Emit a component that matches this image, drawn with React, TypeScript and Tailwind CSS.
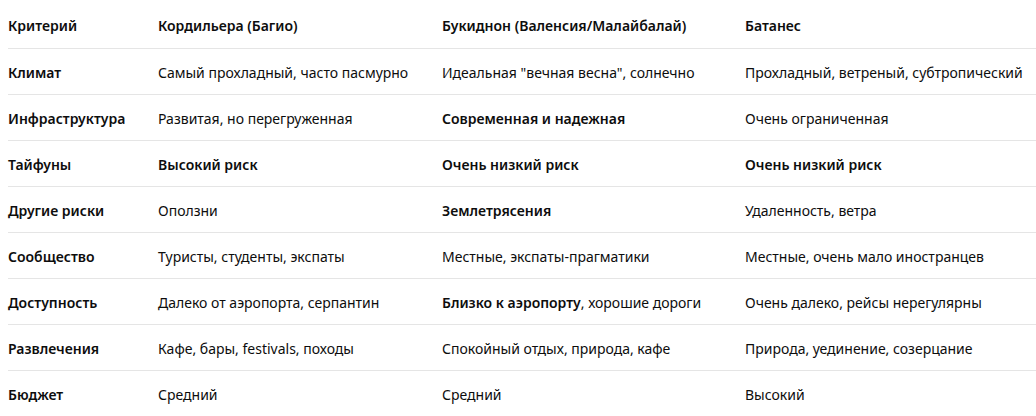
import React from "react";

const header = ["Критерий", "Кордильера (Багио)", "Букиднон (Валенсия/Малайбалай)", "Батанес"];

const rows: React.ReactNode[][] = [
  ["Климат", "Самый прохладный, часто пасмурно", "Идеальная \"вечная весна\", солнечно", "Прохладный, ветреный, субтропический"],
  ["Инфраструктура", "Развитая, но перегруженная", <b className="font-semibold">Современная и надежная</b>, "Очень ограниченная"],
  ["Тайфуны", <b className="font-semibold">Высокий риск</b>, <b className="font-semibold">Очень низкий риск</b>, <b className="font-semibold">Очень низкий риск</b>],
  ["Другие риски", "Оползни", <b className="font-semibold">Землетрясения</b>, "Удаленность, ветра"],
  ["Сообщество", "Туристы, студенты, экспаты", "Местные, экспаты-прагматики", "Местные, очень мало иностранцев"],
  [
    "Доступность",
    "Далеко от аэропорта, серпантин",
    <>
      <b className="font-semibold">Близко к аэропорту</b>, хорошие дороги
    </>,
    "Очень далеко, рейсы нерегулярны",
  ],
  ["Развлечения", "Кафе, бары, festivals, походы", "Спокойный отдых, природа, кафе", "Природа, уединение, созерцание"],
  ["Бюджет", "Средний", "Средний", "Высокий"],
];

const gridCols = "grid grid-cols-[150px_284px_303px_1fr]";

export default function App() {
  return (
    <div
      className="w-[1036px] h-[416px] overflow-hidden bg-white pl-2 text-[14px] text-[#0d0d0d]"
      style={{ fontFamily: '"Noto Sans", "Open Sans", sans-serif' }}
    >
      <div className={`${gridCols} h-[49px] items-center border-b border-[#e5e5e5] font-semibold`}>
        {header.map((h) => (
          <div key={h} className="pt-[2px] whitespace-nowrap">
            {h}
          </div>
        ))}
      </div>
      {rows.map((r, i) => (
        <div
          key={i}
          className={`${gridCols} h-[46px] items-center ${i < rows.length - 1 ? "border-b border-[#e5e5e5]" : ""}`}
        >
          {r.map((c, j) => (
            <div key={j} className={`whitespace-nowrap pt-[1px] ${j === 0 ? "font-semibold" : ""}`}>
              {c}
            </div>
          ))}
        </div>
      ))}
    </div>
  );
}
